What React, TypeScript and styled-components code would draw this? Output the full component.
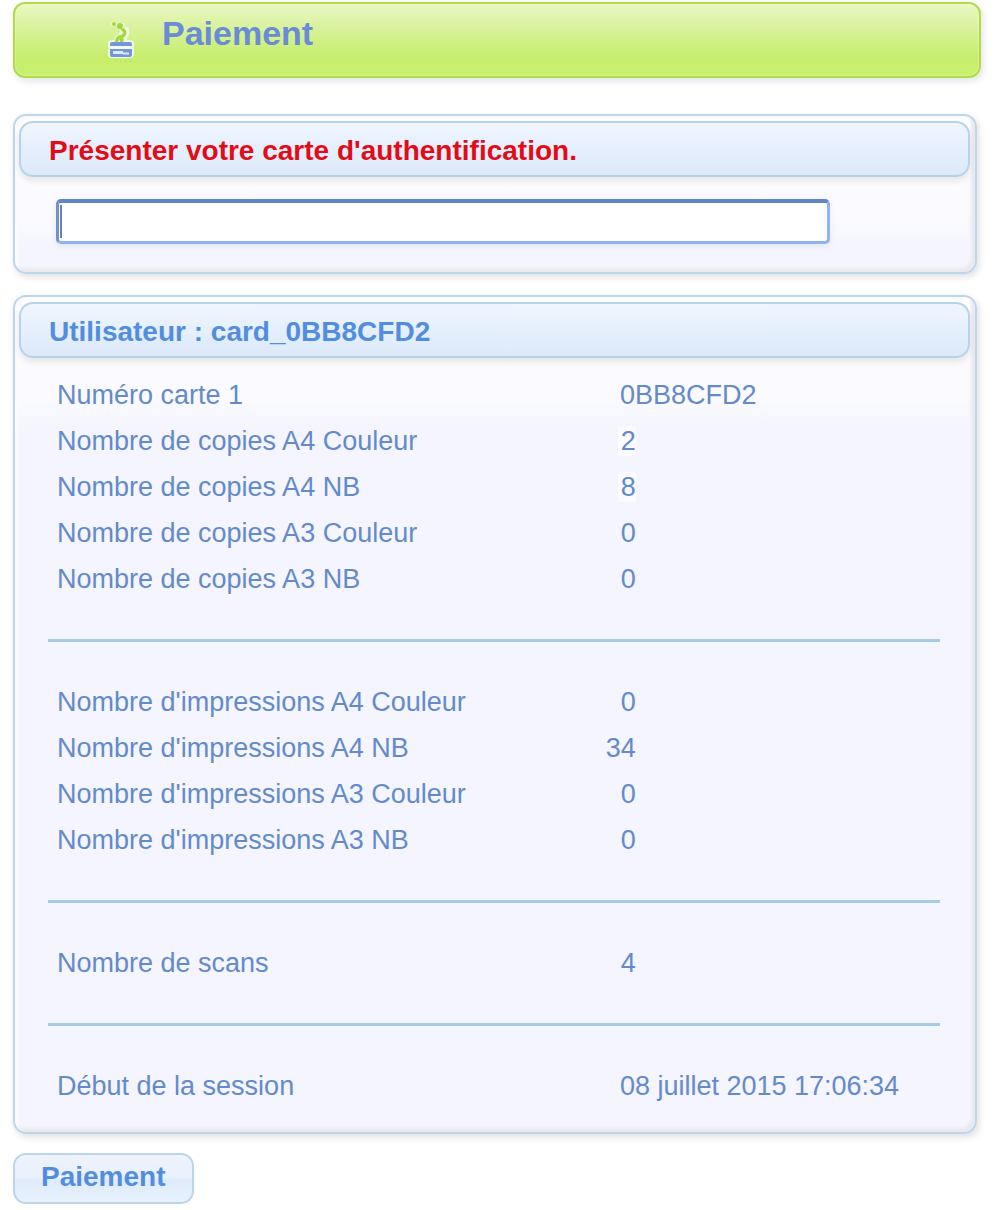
import React from 'react';
import styled, { createGlobalStyle } from 'styled-components';

const GlobalStyle = createGlobalStyle`
  *, *::before, *::after { box-sizing: border-box; }
  body {
    margin: 0;
    background: #fff;
    color: #638acb;
    font-family: "Liberation Sans", Arial, Helvetica, sans-serif;
    font-size: 28px;
  }
`;

const Page = styled.main`
  display: flex;
  flex-direction: column;
  padding: 2px 15px 6px 13px;
`;

const Banner = styled.header`
  display: flex;
  align-items: flex-start;
  gap: 24px;
  height: 76px;
  padding: 9px 93px;
  border: 2px solid #aedd46;
  border-radius: 12px;
  background: linear-gradient(#e8f7c2 0%, #d8f29a 35%, #c7ee6e 72%, #c8ef6d 100%);
  box-shadow: 2px 3px 6px rgba(60, 60, 120, 0.14), inset 0 0 2px #f2fbd8;
`;

const BannerIcon = styled.svg`
  width: 30px;
  height: 46px;
  margin-top: 5px;
  flex: none;
`;

const Title = styled.h1`
  margin: 0;
  color: #6a8bd6;
  font-size: 34px;
  line-height: 40px;
`;

const Panels = styled.div`
  display: flex;
  flex-direction: column;
  gap: 21px;
  margin: 36px 4px 19px 0;
`;

const Panel = styled.section`
  padding: 5px 5px 22px 4px;
  border: 2px solid #bcd7ed;
  border-radius: 13px;
  background: linear-gradient(#fff 0, #fafaff 100px, #f5f5ff 130px);
  box-shadow: 2px 3px 7px rgba(0, 0, 0, 0.13), inset -4px -4px 3px #e9e9ee,
    inset 3px 3px 2px #fbfbff;
`;

const PanelTitle = styled.h2<{ $alert?: boolean }>`
  margin: 0;
  padding: 11px 28px 7px;
  border: 2px solid #b5d4ea;
  border-radius: 14px;
  background: linear-gradient(#f0f6ff, #e6f0fd 45%, #dde9fa);
  box-shadow: 0 4px 6px rgba(0, 0, 0, 0.09);
  color: ${(p) => (p.$alert ? '#e30b17' : '#528de0')};
  font-size: 28px;
  line-height: 34px;
`;

const Field = styled.div`
  padding: 22px 24px 6px 37px;
`;

const CardInput = styled.input`
  display: block;
  width: 87%;
  height: 45px;
  padding: 4px 8px;
  border: 3px solid #8fb3f4;
  border-top: 4px solid #6286c4;
  border-left-color: #7191cb;
  border-radius: 5px;
  outline: none;
  background: linear-gradient(#6480b4, #6480b4) 1px 2px / 2px 33px no-repeat #fff;
  box-shadow: 0 2px 6px rgba(0, 0, 0, 0.07);
  color: inherit;
  font: inherit;
`;

const Details = styled.div`
  padding: 14px 30px 1px 29px;
`;

const Divider = styled.hr`
  height: 3px;
  margin: 37px 0;
  border: 0;
  background: #a5cbe7;
`;

const Counters = styled.table`
  width: 100%;
  table-layout: fixed;
  border-collapse: collapse;
`;

const Label = styled.th`
  width: 64%;
  padding: 0 0 0 9px;
  font-size: 27px;
  font-weight: 400;
  line-height: 46px;
  text-align: left;
`;

const Value = styled.td`
  padding: 0 0 0 1px;
  font-size: 27px;
  line-height: 46px;
  white-space: nowrap;
`;

const Count = styled.span`
  display: inline-block;
  width: 32px;
  margin-left: -16px;
  text-align: right;
`;

const Highlight = styled.span`
  padding-left: 3px;
  background: #fafaff;
`;

const PayButton = styled.button`
  align-self: flex-start;
  padding: 4px 26px 8px;
  border: 2px solid #bad6ed;
  border-radius: 13px;
  background: linear-gradient(#eef3fd 0%, #e9f1fc 48%, #dfebfc 54%, #e8f1fd 100%);
  color: #528de0;
  font: inherit;
  font-weight: 700;
  line-height: 35px;
`;

type Row = { label: string; value: string | number; marked?: boolean };

const groups: Row[][] = [
  [
    { label: 'Numéro carte 1', value: '0BB8CFD2' },
    { label: 'Nombre de copies A4 Couleur', value: 2, marked: true },
    { label: 'Nombre de copies A4 NB', value: 8, marked: true },
    { label: 'Nombre de copies A3 Couleur', value: 0 },
    { label: 'Nombre de copies A3 NB', value: 0 },
  ],
  [
    { label: "Nombre d'impressions A4 Couleur", value: 0 },
    { label: "Nombre d'impressions A4 NB", value: 34 },
    { label: "Nombre d'impressions A3 Couleur", value: 0 },
    { label: "Nombre d'impressions A3 NB", value: 0 },
  ],
  [{ label: 'Nombre de scans', value: 4 }],
  [{ label: 'Début de la session', value: '08 juillet 2015 17:06:34' }],
];

// Bank card with a sprouting plant above it.
function PaymentIcon() {
  return (
    <BannerIcon viewBox="0 0 30 46" aria-hidden="true">
      <g stroke="#f1fae0" strokeWidth="4" strokeLinejoin="round" strokeLinecap="round" fill="#f1fae0">
        <rect x="2" y="24" width="22" height="14" rx="2" />
        <path d="M8 24c0-4 2-6 5-6 0-4 2-6 6-7 1 4 0 7-3 8 2 2 1 4 0 5z" />
        <path d="M5 6h2M12 8l3-1M13 11l5 2" />
      </g>
      <g fill="#a6d643">
        <circle cx="6" cy="6" r="2" />
        <circle cx="12" cy="8" r="3" />
        <path d="M12 11l4-1 2 3-2 2z" />
        <path d="M7 24c0-4 2-7 6-7l5-5c1 4 0 6-3 8 1 1 1 3 0 4h-3l0-3-2 3z" />
      </g>
      <rect x="2" y="24" width="22" height="15" rx="2" fill="#7197d8" />
      <rect x="2" y="28" width="22" height="3" fill="#f5faff" />
      <path d="M5 34.500h10" stroke="#dce9fb" strokeWidth="3" />
      <path d="M15 35.500h6" stroke="#dce9fb" strokeWidth="2" />
      <path d="M7 43h18" stroke="#a9ce5d" strokeWidth="1" strokeDasharray="1 4" />
    </BannerIcon>
  );
}

function RowValue({ value, marked }: Row) {
  if (typeof value === 'string') return <>{value}</>;
  return <Count>{marked ? <Highlight>{value}</Highlight> : value}</Count>;
}

export default function App() {
  return (
    <>
      <GlobalStyle />
      <Page>
        <Banner>
          <PaymentIcon />
          <Title>Paiement</Title>
        </Banner>
        <Panels>
          <Panel>
            <PanelTitle $alert>
              <label htmlFor="card">Présenter votre carte d'authentification.</label>
            </PanelTitle>
            <Field>
              <CardInput id="card" type="text" />
            </Field>
          </Panel>
          <Panel>
            <PanelTitle>Utilisateur : card_0BB8CFD2</PanelTitle>
            <Details>
              {groups.map((rows, i) => (
                <React.Fragment key={i}>
                  {i > 0 && <Divider />}
                  <Counters>
                    <tbody>
                      {rows.map((row) => (
                        <tr key={row.label}>
                          <Label scope="row">{row.label}</Label>
                          <Value>
                            <RowValue {...row} />
                          </Value>
                        </tr>
                      ))}
                    </tbody>
                  </Counters>
                </React.Fragment>
              ))}
            </Details>
          </Panel>
        </Panels>
        <PayButton type="button">Paiement</PayButton>
      </Page>
    </>
  );
}
